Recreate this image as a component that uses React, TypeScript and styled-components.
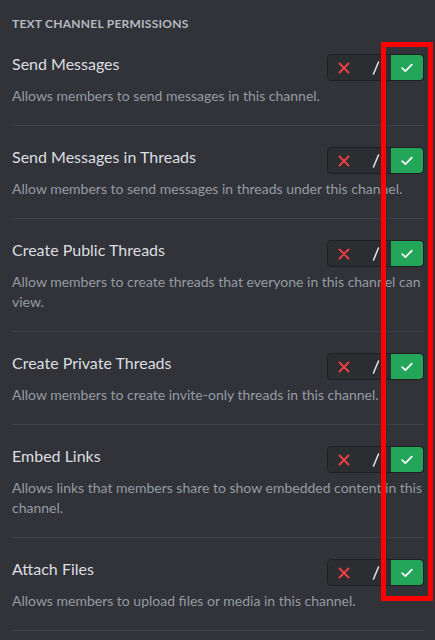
import React from "react";
import styled, { createGlobalStyle } from "styled-components";

const Global = createGlobalStyle`
  html, body { margin: 0; padding: 0; background: #313338; }
  body { font-family: Lato, Roboto, "Noto Sans", sans-serif; -webkit-font-smoothing: antialiased; }
  * { box-sizing: border-box; }
`;

const Page = styled.div`
  position: relative;
  width: 435px;
  height: 640px;
  overflow: hidden;
  background: #313338;
  padding: 16px 11px 0 12px;
`;

const SectionTitle = styled.h2`
  margin: 0 0 22px 0;
  font-size: 12px;
  line-height: 16px;
  font-weight: 700;
  letter-spacing: 0.02em;
  text-transform: uppercase;
  color: #b5bac1;
`;

const Row = styled.div`
  padding-bottom: 19px;
  margin-bottom: 21px;
  border-bottom: 1px solid #3f4147;
`;

const RowHead = styled.div`
  display: flex;
  align-items: flex-start;
  justify-content: space-between;
  height: 27px;
`;

const Title = styled.div`
  font-size: 16px;
  line-height: 20px;
  font-weight: 400;
  color: #dbdee1;
`;

const Desc = styled.div`
  margin-top: 5px;
  font-size: 14px;
  line-height: 20px;
  color: #949ba4;
`;

const Toggle = styled.div`
  display: flex;
  width: 97px;
  height: 27px;
  border: 1px solid #1e1f22;
  border-radius: 4px;
  background: #2b2d31;
  overflow: hidden;
`;

const Seg = styled.div<{ $active?: boolean }>`
  flex: 1;
  display: flex;
  align-items: center;
  justify-content: center;
  background: ${(p) => (p.$active ? "#23a55a" : "transparent")};
  border-radius: ${(p) => (p.$active ? "0 3px 3px 0" : "0")};
`;

const Highlight = styled.div`
  position: absolute;
  left: 381px;
  top: 42px;
  width: 52px;
  height: 559px;
  border: 5px solid #ff0000;
  pointer-events: none;
`;

const XIcon = () => (
  <svg width="12" height="12" viewBox="0 0 12 12">
    <path d="M1.5 1.5 L10.5 10.5 M10.5 1.5 L1.5 10.5" stroke="#f23f43" strokeWidth="1.8" strokeLinecap="round" />
  </svg>
);

const SlashIcon = () => (
  <svg width="8" height="14" viewBox="0 0 8 14">
    <path d="M6.5 1 L1.5 13" stroke="#dbdee1" strokeWidth="1.6" strokeLinecap="round" />
  </svg>
);

const CheckIcon = () => (
  <svg width="12" height="10" viewBox="0 0 12 10">
    <path d="M1.2 5.2 L4.4 8.2 L10.8 1.6" stroke="#ffffff" strokeWidth="1.7" fill="none" strokeLinecap="round" strokeLinejoin="round" />
  </svg>
);

const perms = [
  { title: "Send Messages", desc: "Allows members to send messages in this channel." },
  { title: "Send Messages in Threads", desc: "Allow members to send messages in threads under this channel." },
  { title: "Create Public Threads", desc: "Allow members to create threads that everyone in this channel can view." },
  { title: "Create Private Threads", desc: "Allow members to create invite-only threads in this channel." },
  { title: "Embed Links", desc: "Allows links that members share to show embedded content in this channel." },
  { title: "Attach Files", desc: "Allows members to upload files or media in this channel." },
];

export default function App() {
  return (
    <>
      <Global />
      <Page>
        <SectionTitle>Text Channel Permissions</SectionTitle>
        {perms.map((p) => (
          <Row key={p.title}>
            <RowHead>
              <Title>{p.title}</Title>
              <Toggle>
                <Seg><XIcon /></Seg>
                <Seg><SlashIcon /></Seg>
                <Seg $active><CheckIcon /></Seg>
              </Toggle>
            </RowHead>
            <Desc>{p.desc}</Desc>
          </Row>
        ))}
        <Highlight />
      </Page>
    </>
  );
}
